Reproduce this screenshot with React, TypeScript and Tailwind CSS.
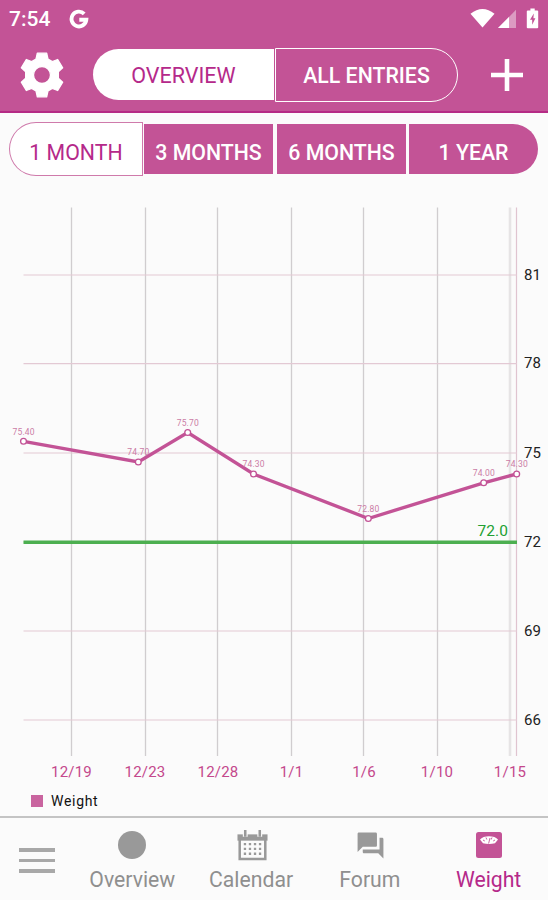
import React, { useState } from "react";
import { MdForum } from "react-icons/md";

const verticalLines: number[] = [71.5, 145.5, 217.5, 291.5, 363.5, 437.5];

const dates = [
  { x: 71.5, label: "12/19" },
  { x: 145, label: "12/23" },
  { x: 218, label: "12/28" },
  { x: 291.5, label: "1/1" },
  { x: 364, label: "1/6" },
  { x: 437, label: "1/10" },
  { x: 510, label: "1/15" },
];

const levels = [
  { y: 275, label: "81" },
  { y: 363.7, label: "78" },
  { y: 453, label: "75" },
  { y: 542, label: "72" },
  { y: 631, label: "69" },
  { y: 720, label: "66" },
];

const points = [
  { x: 23.5, y: 441.3, label: "75.40" },
  { x: 138.3, y: 462, label: "74.70" },
  { x: 187.7, y: 432.5, label: "75.70" },
  { x: 253.5, y: 474, label: "74.30" },
  { x: 368.3, y: 518.5, label: "72.80" },
  { x: 483.7, y: 482.8, label: "74.00" },
  { x: 516.7, y: 474, label: "74.30" },
];

const StatusBar = () => (
  <div className="flex h-[38px] items-center text-white">
    <span className="ml-[9px] w-[60px] pt-px text-[21px] leading-none font-medium">
      7:54
    </span>
    <svg className="h-5 w-5" viewBox="0 0 20 20" fill="none">
      <path
        d="M15.2 4.8A7.4 7.4 0 1 0 17.3 10.8H10.3"
        stroke="currentColor"
        strokeWidth="3.9"
      />
    </svg>
    <svg className="mb-0.5 ml-auto h-[22px] w-[72px]" viewBox="0 0 72 22">
      <path d="M.5 6.8Q12.500-2.800 24.500 6.800L12.500 20.500Z" fill="currentColor" />
      <path d="M46 2.800V21H28Z" fill="currentColor" opacity=".42" />
      <path d="M39 10V21H28Z" fill="currentColor" />
      <path
        d="M60.400 1.500h4.300v2h2.500q1 0 1 .8v16.200q0 .8-1 .8H57.800q-1 0-1-.8V4.300q0-.8 1-.8H60.400Z"
        fill="currentColor"
      />
      <path d="M63.800 6.500l-3.800 6.300h2.200v5l3.200-6.600h-2Z" fill="#c35396" />
    </svg>
    <span className="w-[6px]" />
  </div>
);

const Gear = () => (
  <svg className="h-[54px] w-[54px] text-white" viewBox="16 16.5 162 162">
    <path
      fill="currentColor"
      fillRule="evenodd"
      stroke="currentColor"
      strokeWidth="4"
      strokeLinejoin="round"
      d="M83 32H111L115 50L128 57L144 51L159 76L146 88V107L159 119L144 144L128 138L115 145L111 163H83L79 145L66 138L50 144L35 119L48 107V88L35 76L50 51L66 57L79 50ZM97 72A25.500 25.500 0 1 0 97 123A25.500 25.500 0 1 0 97 72Z"
    />
  </svg>
);

const Chart = () => (
  <svg
    className="block h-[587px] w-[548px]"
    viewBox="0 200 548 587"
    fontFamily="Roboto, sans-serif"
  >
    {verticalLines.map((x) => (
      <path key={x} d={`M${x} 207.500V756`} stroke="#d0cdcf" strokeWidth="1.300" />
    ))}
    <path d="M510 207.500V756" stroke="#e6e4e5" strokeWidth="2.600" />
    <path d="M516.500 207.500V756" stroke="#e0c4d0" strokeWidth="1.200" />
    {levels.map((level) => (
      <g key={level.label}>
        <path d={`M23.500 ${level.y}H517`} stroke="#e3c9d4" strokeWidth="1.200" />
        <text x="524" y={level.y + 4.6} fontSize="15" fill="#222">
          {level.label}
        </text>
      </g>
    ))}
    <path d="M23.500 542.300H517" stroke="#4caf50" strokeWidth="3.400" />
    <text x="477.500" y="536" fontSize="15.500" fill="#22a032" textLength="30.500">
      72.0
    </text>
    <polyline
      points={points.map((p) => `${p.x},${p.y}`).join(" ")}
      fill="none"
      stroke="#c35396"
      strokeWidth="3.400"
    />
    {points.map((p) => (
      <g key={p.x}>
        <circle cx={p.x} cy={p.y} r="2.900" fill="#fff" stroke="#c35396" strokeWidth="1.300" />
        <text
          x={p.x}
          y={p.y - 6.8}
          fontSize="8.500"
          fill="#cb7ba6"
          textAnchor="middle"
          textLength="22"
        >
          {p.label}
        </text>
      </g>
    ))}
    {dates.map((date) => (
      <text
        key={date.label}
        x={date.x}
        y="776.800"
        fontSize="15"
        letterSpacing=".2"
        fill="#c4488c"
        textAnchor="middle"
      >
        {date.label}
      </text>
    ))}
  </svg>
);

const CalendarIcon = () => (
  <svg className="ml-0.5 h-[31px] w-[31px]" viewBox="0 0 32 32">
    <path fill="#999" d="M.5 4.500h31v6.500h-31z" />
    <path fill="none" stroke="#999" strokeWidth="2.600" d="M2.800 9v21h26.400V9" />
    <path stroke="#fafafa" strokeWidth="5" d="M8.500 0v7M23.500 0v7" />
    <path stroke="#999" strokeWidth="2.600" d="M8.500 0v7M23.500 0v7" />
    {[14.5, 19.5, 24.5].map((y) => (
      <path
        key={y}
        stroke="#999"
        strokeWidth="2.400"
        strokeDasharray="2.400 2.800"
        d={`M7 ${y}H25.500`}
      />
    ))}
  </svg>
);

const ScaleIcon = () => (
  <svg className="h-[26px] w-[26px]" viewBox="0 0 26 26">
    <rect width="26" height="26" rx="2.500" fill="#c35396" />
    <path d="M4 7.500C7 3 19 3 22 7.500L19 11.300Q13 12.800 7 11.300Z" fill="#fff" />
    <path
      d="M7 8l1.800 1M10 5.500l.8 2M19 8l-1.800 1M16 5.500l-.8 2M14 6l-1.400 5.500"
      stroke="#c35396"
      strokeWidth=".9"
    />
  </svg>
);

const navItems = [
  { name: "Overview", icon: <span className="h-7 w-7 rounded-full bg-[#999]" /> },
  { name: "Calendar", icon: <CalendarIcon /> },
  { name: "Forum", icon: <MdForum size={31} color="#999" className="ml-0.5" /> },
  { name: "Weight", icon: <ScaleIcon /> },
];

const App = () => {
  const [range, setRange] = useState<string>("1 MONTH");

  const ranges = [
    { name: "1 MONTH", shape: "h-[54px] w-[134px] rounded-l-full rounded-r-[3px]" },
    { name: "3 MONTHS", shape: "ml-px h-[50px] w-[129px]" },
    { name: "6 MONTHS", shape: "ml-1 h-[50px] w-[129px]" },
    { name: "1 YEAR", shape: "ml-[3px] h-[50px] w-[129px] rounded-r-full" },
  ];

  return (
    <div className="flex h-[900px] w-[548px] flex-col overflow-hidden bg-[#fbfbfb] font-[Roboto,sans-serif]">
      <header className="h-[113px] border-b-2 border-[#b52b85] bg-[#c35396]">
        <StatusBar />
        <div className="flex h-[73px] items-center pl-[15px]">
          <Gear />
          <div className="ml-6 flex items-center text-[21.5px] leading-none">
            <button className="h-[51px] w-[181px] rounded-l-full bg-white pt-0.5 text-[#b5298a]">
              OVERVIEW
            </button>
            <button className="ml-px h-[54px] w-[183px] rounded-r-full border-[1.5px] border-white pt-0.5 text-[21.3px] font-medium text-white">
              ALL ENTRIES
            </button>
          </div>
          <svg className="ml-[33px] h-8 w-8" viewBox="0 0 32 32">
            <path d="M16 0v32M0 16h32" stroke="#fff" strokeWidth="4.600" />
          </svg>
        </div>
      </header>

      <div className="mt-[9px] flex h-[54px] items-center pl-[9px]">
        {ranges.map((item) => (
          <button
            key={item.name}
            onClick={() => setRange(item.name)}
            className={`${item.shape} pt-[7px] text-[21.3px] leading-none ${
              range === item.name
                ? "border-[1.5px] border-[#cf7aab] bg-white text-[#b5298a]"
                : "bg-[#c35396] font-medium text-white"
            }`}
          >
            {item.name}
          </button>
        ))}
      </div>

      <div className="mt-6">
        <Chart />
      </div>
      <div className="flex h-[29px] items-center pb-px pl-[31px] text-sm text-[#111]">
        <span className="mr-2 h-3 w-3 bg-[#c9649f]" />
        <span className="tracking-[0.7px]">Weight</span>
      </div>

      <nav className="flex h-[84px] border-t-2 border-[#c4c4c4]">
        <div className="flex w-[73px] flex-col gap-[7px] pt-[30px] pl-[19px]">
          <span className="h-[3.500px] w-9 bg-[#a8a8a8]" />
          <span className="h-[3.500px] w-9 bg-[#a8a8a8]" />
          <span className="h-[3.500px] w-9 bg-[#a8a8a8]" />
        </div>
        {navItems.map((item) => (
          <div key={item.name} className="flex w-[119px] flex-col items-center">
            <div className="mt-[11px] flex h-8 items-center">{item.icon}</div>
            <span
              className={`mt-[7px] text-[21.2px] leading-[24px] ${
                item.name === "Weight" ? "text-[#b5298a]" : "text-[#8f8f8f]"
              }`}
            >
              {item.name}
            </span>
          </div>
        ))}
      </nav>
    </div>
  );
};

export default App;
